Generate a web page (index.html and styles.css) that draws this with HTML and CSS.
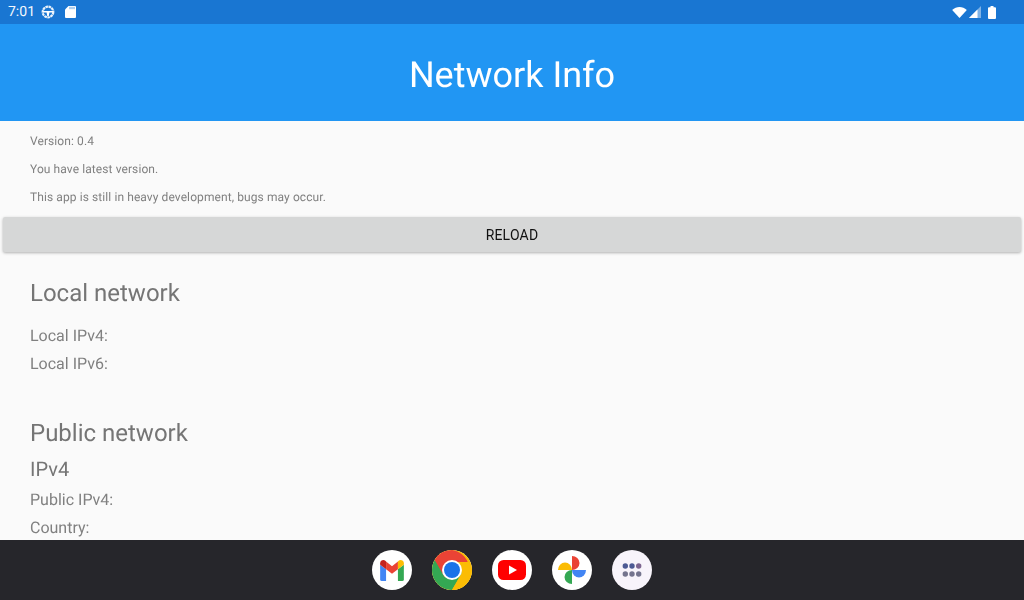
FILE: index.html
```html
<!DOCTYPE html>
<html lang="en">
<head>
<meta charset="utf-8">
<title>Network Info</title>
<link rel="stylesheet" href="styles.css">
</head>
<body>
<div class="screen">
  <div class="status">
    <div class="status-left">
      <span class="time">7:01</span>
      <svg class="st-wheel" width="14" height="14" viewBox="0 0 14 14"><circle cx="7" cy="7" r="5.300" fill="none" stroke="#fff" stroke-width="2.200" stroke-dasharray="2.600 .5" opacity=".9"/><path d="M2 6h10v1.400H8.400L7.800 11H6.200l-.6-3.600H2z" fill="#fff"/></svg>
      <svg class="st-sd" width="11" height="12" viewBox="0 0 11 12"><path d="M3.500 0H10a1 1 0 0 1 1 1v10a1 1 0 0 1-1 1H1a1 1 0 0 1-1-1V3.500z" fill="#fff"/><path d="M5 .8v2.400M7 .8v2.400M9 .8v2.400" stroke="#1976d2" stroke-width=".7"/></svg>
    </div>
    <div class="status-right">
      <svg width="15" height="11" viewBox="0 0 16 12"><path d="M0 3.300C4.500-1 11.500-1 16 3.300L8 12z" fill="#fff"/></svg>
      <svg width="12" height="12" viewBox="0 0 12 12"><path d="M12 0v12H0z" fill="#fff" opacity=".45"/><path d="M8.500 3.500V12H0z" fill="#fff"/></svg>
      <svg class="st-batt" width="8" height="13" viewBox="0 0 8 13"><path d="M2.500 0h3v1.200H7a1 1 0 0 1 1 1V12a1 1 0 0 1-1 1H1a1 1 0 0 1-1-1V2.200a1 1 0 0 1 1-1h1.500z" fill="#fff"/></svg>
    </div>
  </div>
  <header class="appbar"><h1>Network Info</h1></header>
  <main class="content">
    <p class="small">Version: 0.4</p>
    <p class="small">You have latest version.</p>
    <p class="small">This app is still in heavy development, bugs may occur.</p>
    <button class="reload" type="button">RELOAD</button>
    <section class="local">
      <h2>Local network</h2>
      <p class="row">Local IPv4:</p>
      <p class="row">Local IPv6:</p>
    </section>
    <section class="public">
      <h2>Public network</h2>
      <h3>IPv4</h3>
      <p class="row">Public IPv4:</p>
      <p class="row">Country:</p>
    </section>
  </main>
  <nav class="dock">
    <div class="app">
      <svg width="26" height="21" viewBox="1 2.500 22 19.500"><path d="M1 7v13.500A1.500 1.500 0 0 0 2.500 22H6.500V11z" fill="#4285f4"/><path d="M17.500 11V22h4a1.500 1.500 0 0 0 1.500-1.500V7z" fill="#34a853"/><path d="M6.500 11 1 7V5.500C1 3 4 1.800 5.800 3.200L6.500 3.800z" fill="#c5221f"/><path d="M6.500 4 12 8.200 17.500 4v7L12 15.200 6.500 11z" fill="#ea4335"/><path d="M17.500 3.800l.7-.6C20 1.800 23 3 23 5.500V7l-5.500 4z" fill="#fbbc04"/></svg>
    </div>
    <div class="app">
      <svg class="full" width="40" height="40" viewBox="0 0 40 40"><circle cx="20" cy="20" r="20" fill="#fbbc04"/><path d="M20 20 2.700 10A20 20 0 0 0 20 40l10-17.300z" fill="#34a853"/><path d="M20 0A20 20 0 0 0 2.700 10l10 17.300L20 20h17.300A20 20 0 0 0 20 0z" fill="#ea4335"/><path d="M20 12h17.300A20 20 0 0 1 40 20a20 20 0 0 1-20 20l10-17.300z" fill="#fbbc04"/><circle cx="20" cy="20" r="10" fill="#fff"/><circle cx="20" cy="20" r="8" fill="#1a73e8"/></svg>
    </div>
    <div class="app">
      <svg width="28" height="20" viewBox="0 0 28 20"><rect width="28" height="20" rx="5.500" fill="#f00"/><path d="M11 5.500v9l8-4.500z" fill="#fff"/></svg>
    </div>
    <div class="app">
      <svg width="30" height="30" viewBox="0 0 30 30"><path d="M15 15V1a7.500 7 0 0 1 0 14z" fill="#ea4335"/><path d="M15 15h14a7 7.500 0 0 1-14 0z" fill="#4285f4"/><path d="M15 15v14a7.500 7 0 0 1 0-14z" fill="#34a853"/><path d="M15 15H1a7 7.500 0 0 1 14 0z" fill="#fbbc04"/></svg>
    </div>
    <div class="app apps">
      <svg width="20" height="14" viewBox="0 0 20 14"><g fill="#4d5a94"><circle cx="3.300" cy="3" r="2.700"/><circle cx="10" cy="3" r="2.700"/></g><circle cx="16.700" cy="3" r="2.700" fill="#7d6590"/><g fill="#74748e"><circle cx="3.300" cy="11" r="2.700"/><circle cx="10" cy="11" r="2.700"/><circle cx="16.700" cy="11" r="2.700"/></g></svg>
    </div>
  </nav>
</div>
</body>
</html>
```

FILE: styles.css
```css
* { box-sizing: border-box; }
html, body { margin: 0; padding: 0; }
body { width: 1024px; height: 600px; overflow: hidden; font-family: Roboto, sans-serif; text-rendering: geometricPrecision; }
.screen { width: 1024px; height: 600px; display: flex; flex-direction: column; background: #fafafa; }
.status { height: 24px; flex: none; background: #1976d2; color: #fff; display: flex; justify-content: space-between; align-items: center; padding: 0 28px 0 8px; }
.status-left, .status-right { display: flex; align-items: center; }
.time { font-size: 14px; margin-right: 6px; color: #f2f7fc; }
.st-wheel { margin-right: 10px; }
.status-right { gap: 2px; }
.st-batt { margin-left: 5px; }
.appbar { height: 97px; flex: none; background: #2196f3; display: flex; align-items: center; justify-content: center; padding-top: 4px; }
.appbar h1 { margin: 0; font-size: 36px; font-weight: 400; color: #fff; will-change: opacity; }
.content { flex: 1; min-height: 0; overflow: hidden; display: flex; flex-direction: column; padding-top: 6px; will-change: opacity; }
.small { margin: 0; padding-left: 30px; height: 28px; line-height: 28px; font-size: 12px; color: #808080; letter-spacing: .09px; flex: none; }
.reload { flex: none; margin: 6px 3px 0; height: 35px; border: 0; border-radius: 2px; background: #d6d7d7; font: 400 14px Roboto, sans-serif; color: #111; letter-spacing: .2px; box-shadow: 0 1px 3px rgba(0,0,0,.3); padding: 1px 0 0; }
.local, .public { padding-left: 30px; flex: none; }
.local { margin-top: 24px; }
.public { margin-top: 38px; }
h2 { margin: 0; font-size: 24px; font-weight: 400; color: #757575; height: 34px; line-height: 34px; }
h3 { margin: 0; font-size: 20px; font-weight: 400; color: #757575; height: 30px; line-height: 30px; margin-top: 4px; }
.row { margin: 0; font-size: 16px; color: #808080; height: 28px; line-height: 28px; }
.local h2 { margin-bottom: 12px; }
.public h3 + .row { margin-top: 2px; }
.dock { height: 60px; flex: none; background: #26262b; display: flex; justify-content: center; align-items: center; gap: 20px; }
.app { width: 40px; height: 40px; border-radius: 50%; background: #fff; display: flex; align-items: center; justify-content: center; }
.apps { background: #f8f4fb; }
```
